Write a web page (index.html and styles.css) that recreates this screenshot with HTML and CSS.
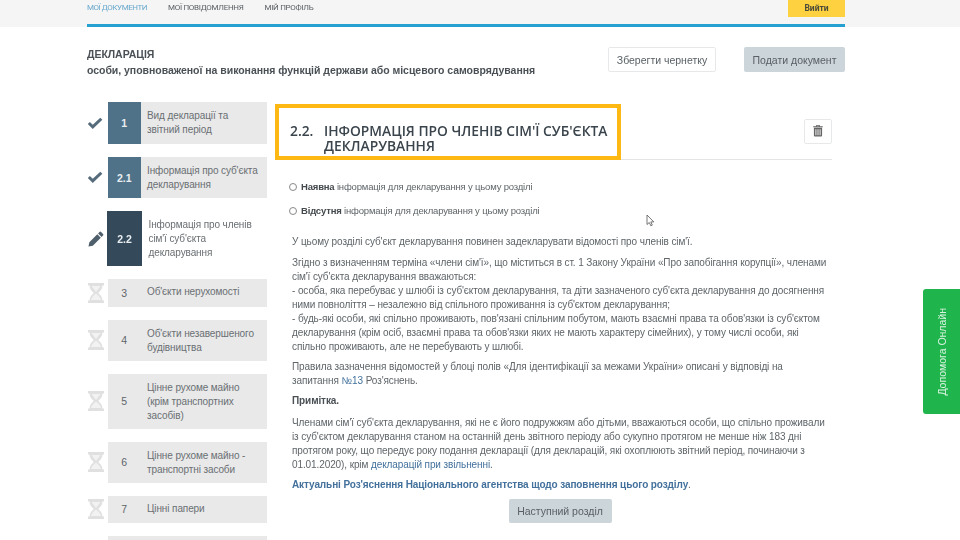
FILE: index.html
```html
<!DOCTYPE html>
<html lang="uk">
<head>
  <meta charset="UTF-8" />
  <title>Декларація</title>
  <link rel="stylesheet" href="styles.css">
</head>
<body>
  <svg class="defs" width="0" height="0">
    <symbol id="check" viewBox="0 0 20 16"><path d="M1 8.500 3.600 6l3.600 3.600L16.600.8 19.200 3.400 7.200 15z"/></symbol>
    <symbol id="pencil" viewBox="0 0 20 20"><path d="M14.400 1.200a1.400 1.400 0 0 1 2 0l2.400 2.400a1.400 1.400 0 0 1 0 2L17 7.400 12.600 3zM11.600 4l4.400 4.400L6 18.300 0.600 19.400 1.700 14z"/></symbol>
    <symbol id="hourglass" viewBox="0 0 16 20">
      <path d="M0 0h16v2.500h-1.500c-.2 3.600-2.300 5.700-4.300 7.500 2 1.800 4.100 3.900 4.300 7.500H16V20H0v-2.500h1.500c.2-3.600 2.300-5.700 4.300-7.500-2-1.800-4.100-3.900-4.300-7.500H0z" fill="#e0e0e0"/>
      <path d="M3.500 3h9L8 9zM3 17c.4-2.500 2.800-4.800 5-6.500 2.200 1.700 4.600 4 5 6.500z" fill="#f2f2f2"/>
    </symbol>
  </svg>

  <header class="topbar">
    <nav class="topnav">
      <a class="nav-link nav-active">МОЇ ДОКУМЕНТИ</a>
      <a class="nav-link">МОЇ ПОВІДОМЛЕННЯ</a>
      <a class="nav-link">МІЙ ПРОФІЛЬ</a>
      <a class="logout">Вийти</a>
    </nav>
  </header>

  <div class="page">
    <div class="doc-head">
      <div class="doc-title">
        <div>ДЕКЛАРАЦІЯ</div>
        <div>особи, уповноваженої на виконання функцій держави або місцевого самоврядування</div>
      </div>
      <button class="btn btn-white">Зберегти чернетку</button>
      <button class="btn btn-grey">Подати документ</button>
    </div>

    <div class="columns">
      <aside class="steps">
        <div class="step step-done">
          <svg class="step-icon icon-check"><use href="#check"/></svg>
          <div class="step-num">1</div>
          <div class="step-label">Вид декларації та<br>звітний період</div>
        </div>
        <div class="step step-done">
          <svg class="step-icon icon-check"><use href="#check"/></svg>
          <div class="step-num">2.1</div>
          <div class="step-label">Інформація про суб'єкта<br>декларування</div>
        </div>
        <div class="step step-current">
          <svg class="step-icon icon-pencil"><use href="#pencil"/></svg>
          <div class="step-num">2.2</div>
          <div class="step-label">Інформація про членів<br>сім'ї суб'єкта<br>декларування</div>
        </div>
        <div class="step step-short">
          <svg class="step-icon icon-glass"><use href="#hourglass"/></svg>
          <div class="step-num">3</div>
          <div class="step-label">Об'єкти нерухомості</div>
        </div>
        <div class="step">
          <svg class="step-icon icon-glass"><use href="#hourglass"/></svg>
          <div class="step-num">4</div>
          <div class="step-label">Об'єкти незавершеного<br>будівництва</div>
        </div>
        <div class="step">
          <svg class="step-icon icon-glass"><use href="#hourglass"/></svg>
          <div class="step-num">5</div>
          <div class="step-label">Цінне рухоме майно<br>(крім транспортних<br>засобів)</div>
        </div>
        <div class="step">
          <svg class="step-icon icon-glass"><use href="#hourglass"/></svg>
          <div class="step-num">6</div>
          <div class="step-label">Цінне рухоме майно -<br>транспортні засоби</div>
        </div>
        <div class="step step-short">
          <svg class="step-icon icon-glass"><use href="#hourglass"/></svg>
          <div class="step-num">7</div>
          <div class="step-label">Цінні папери</div>
        </div>
        <div class="step step-short">
          <svg class="step-icon icon-glass"><use href="#hourglass"/></svg>
          <div class="step-num"></div>
          <div class="step-label"></div>
        </div>
      </aside>

      <main class="content">
        <div class="section-head">
          <h1 class="section-title"><span class="section-no">2.2.</span><span>ІНФОРМАЦІЯ ПРО ЧЛЕНІВ СІМ'Ї СУБ'ЄКТА<br>ДЕКЛАРУВАННЯ</span></h1>
          <button class="trash">
            <svg width="10" height="13" viewBox="0 0 11 13"><path d="M3.500 1.800V.5h4v1.300h3.300v1.200H.2V1.800zM4.500 1.800h2V1.300h-2zM1 3.600h9V12a1 1 0 0 1-1 1H2a1 1 0 0 1-1-1zM2.700 5v6.800h1V5zM5 5v6.800h1V5zM7.300 5v6.800h1V5z" fill-rule="evenodd"/></svg>
          </button>
        </div>

        <div class="radio-row"><span class="radio"></span><span><b>Наявна</b> інформація для декларування у цьому розділі</span></div>
        <div class="radio-row"><span class="radio"></span><span><b>Відсутня</b> інформація для декларування у цьому розділі</span></div>

        <div class="text">
          <p>У цьому розділі суб'єкт декларування повинен задекларувати відомості про членів сім'ї.</p>
          <p>Згідно з визначенням терміна «члени сім'ї», що міститься в ст. 1 Закону України «Про запобігання корупції», членами<br>
          сім'ї суб'єкта декларування вважаються:<br>
          - особа, яка перебуває у шлюбі із суб'єктом декларування, та діти зазначеного суб'єкта декларування до досягнення<br>
          ними повноліття – незалежно від спільного проживання із суб'єктом декларування;<br>
          - будь-які особи, які спільно проживають, пов'язані спільним побутом, мають взаємні права та обов'язки із суб'єктом<br>
          декларування (крім осіб, взаємні права та обов'язки яких не мають характеру сімейних), у тому числі особи, які<br>
          спільно проживають, але не перебувають у шлюбі.</p>
          <p>Правила зазначення відомостей у блоці полів «Для ідентифікації за межами України» описані у відповіді на<br>
          запитання <a class="link">№13</a> Роз'яснень.</p>
          <p class="note"><b>Примітка.</b></p>
          <p>Членами сім'ї суб'єкта декларування, які не є його подружжям або дітьми, вважаються особи, що спільно проживали<br>
          із суб'єктом декларування станом на останній день звітного періоду або сукупно протягом не менше ніж 183 дні<br>
          протягом року, що передує року подання декларації (для декларацій, які охоплюють звітний період, починаючи з<br>
          01.01.2020), крім <a class="link">декларацій при звільненні</a>.</p>
          <p><a class="link"><b>Актуальні Роз'яснення Національного агентства щодо заповнення цього розділу</b></a>.</p>
        </div>

        <div class="next-row"><button class="btn btn-grey btn-next">Наступний розділ</button></div>
      </main>
    </div>
  </div>

  <div class="help"><span>Допомога Онлайн</span></div>

  <svg class="cursor" width="9" height="13" viewBox="0 0 9 13"><path d="M1 1v9.500l2.300-2 1.500 3.300 1.500-.7-1.500-3.200h3z" fill="#fff" stroke="#555" stroke-width=".8"/></svg>
</body>
</html>
```

FILE: styles.css
```css
html, body {
  margin: 0;
  height: 540px;
  overflow: hidden;
}

body {
  font-family: "Liberation Sans", Arial, sans-serif;
  background-color: #fff;
  color: #5f6569;
  position: relative;
  filter: blur(0.4px);
}

.defs {
  position: absolute;
}

.topbar {
  background-color: #f5f5f5;
  height: 27px;
  padding-left: 87px;
}

.topnav {
  width: 758px;
  height: 27px;
  box-sizing: border-box;
  border-bottom: 3px solid #25a0d0;
  display: flex;
  align-items: flex-start;
  gap: 21px;
  font-family: Roboto, sans-serif;
  font-size: 8px;
  letter-spacing: -0.3px;
}

.nav-link {
  line-height: 16px;
  color: #5a5f63;
}

.nav-active {
  color: #6aa9cd;
  letter-spacing: -0.45px;
}

.logout {
  margin-left: auto;
  width: 57px;
  height: 17px;
  line-height: 16px;
  text-align: center;
  background-color: #fdd13f;
  color: #4a4a3a;
  font-size: 8.500px;
  letter-spacing: 0;
  font-weight: bold;
}

.page {
  width: 758px;
  margin-left: 87px;
}

.doc-head {
  display: flex;
  align-items: flex-start;
  padding-top: 20px;
  height: 55px;
}

.doc-title {
  flex: 1;
  font-size: 10.500px;
  letter-spacing: -0.035px;
  font-weight: bold;
  line-height: 15.500px;
  color: #4a5055;
}

.btn {
  font-family: "Liberation Sans", Arial, sans-serif;
  font-size: 10.500px;
  color: #5a6065;
  height: 25px;
  padding: 0;
  border-radius: 2px;
  cursor: pointer;
}

.btn-white {
  width: 108px;
  background-color: #fff;
  border: 1px solid #e6e8e9;
  margin-right: 28px;
}

.btn-grey {
  width: 101px;
  background-color: #ccd5da;
  border: none;
}

.columns {
  display: flex;
  align-items: flex-start;
}

.steps {
  width: 180px;
  display: flex;
  flex-direction: column;
  gap: 13px;
  flex: none;
}

.step {
  display: flex;
  align-items: stretch;
  min-height: 41px;
}

.step:first-child {
  min-height: 42px;
}

.step-short {
  min-height: 27.500px;
}

.step-icon {
  flex: none;
  align-self: center;
  fill: #566b7c;
}

.icon-check {
  height: 13px;
  width: 16px;
  margin: 0 5px 0 0;
}

.icon-pencil {
  height: 16px;
  width: 16px;
  margin: 0 4px 0 1px;
}

.icon-glass {
  height: 20px;
  width: 16px;
  margin: 0 4px 0 1px;
}

.step-num {
  width: 32.500px;
  flex: none;
  display: flex;
  align-items: center;
  justify-content: center;
  font-size: 10.500px;
  background-color: #e9e9e9;
}

.step-label {
  flex: 1;
  background-color: #e9e9e9;
  font-size: 10px;
  letter-spacing: -0.1px;
  line-height: 14px;
  padding: 7px 0 6px 6.500px;
  color: #6a6f73;
}

.step-short .step-label {
  padding-top: 6px;
  padding-bottom: 6px;
}

.step-done .step-num {
  background-color: #4f7289;
  color: #e9eef1;
  font-weight: bold;
}

.step-current .step-icon {
  fill: #4f5f6b;
}

.step-current .step-num {
  width: 35px;
  margin-left: -1px;
  background-color: #34495a;
  color: #e9eef1;
  font-weight: bold;
}

.step-current .step-label {
  background-color: transparent;
}

.content {
  width: 557px;
  margin-left: 8px;
  position: relative;
}

.section-head {
  height: 55px;
  border-bottom: 1px solid #e4e4e4;
  display: flex;
  justify-content: space-between;
  align-items: flex-start;
  margin-top: 2px;
}

.section-title {
  margin: 0;
  width: 346px;
  height: 56px;
  box-sizing: border-box;
  border: 4px solid #fdb813;
  padding: 15px 0 0 11px;
  display: flex;
  font-family: "Open Sans", sans-serif;
  font-size: 13.800px;
  font-weight: 600;
  line-height: 15px;
  color: #3a444c;
  white-space: nowrap;
}

.section-no {
  width: 34px;
  flex: none;
}

.trash {
  width: 28px;
  height: 25px;
  margin-top: 15px;
  padding: 0;
  background-color: #fff;
  border: 1px solid #e6e8e9;
  border-radius: 2px;
  fill: #666;
}

.radio-row {
  display: flex;
  align-items: center;
  gap: 4px;
  font-size: 9.500px;
  letter-spacing: -0.18px;
  line-height: 12px;
  margin-left: 14px;
  height: 12px;
}

.section-head + .radio-row {
  margin-top: 21px;
}

.radio-row + .radio-row {
  margin-top: 12px;
}

.radio {
  width: 6px;
  height: 6px;
  border: 1px solid #888;
  border-radius: 50%;
  background-color: #fff;
}

.radio-row b {
  color: #44494d;
}

.text {
  margin: 18px 0 0 17px;
  font-size: 10px;
  letter-spacing: -0.1px;
  line-height: 14px;
  white-space: nowrap;
}

.text p {
  margin: 0 0 6.500px;
}

.text .note {
  margin-top: -1px;
  margin-bottom: 8px;
}

.text b {
  color: #4a5055;
}

.link,
.link b {
  color: #43719c;
}

.next-row {
  text-align: center;
  padding-left: 13px;
  margin-top: 2px;
}

.btn-next {
  width: 103px;
  height: 24px;
}

.help {
  position: absolute;
  left: 923px;
  top: 289px;
  width: 37px;
  height: 125px;
  background-color: #1fb54c;
  border-radius: 3px 0 0 3px;
  display: flex;
  align-items: center;
  justify-content: center;
}

.help span {
  writing-mode: vertical-rl;
  transform: rotate(180deg);
  color: #d8f2df;
  font-size: 10.500px;
  white-space: nowrap;
}

.cursor {
  position: absolute;
  left: 646px;
  top: 214px;
}
```
